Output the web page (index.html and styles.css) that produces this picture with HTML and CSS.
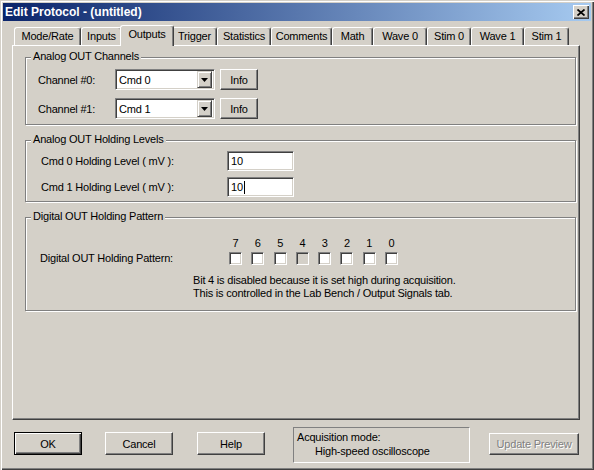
FILE: index.html
```html
<!DOCTYPE html>
<html>
<head>
<meta charset="utf-8">
<title>Edit Protocol</title>
<link rel="stylesheet" href="styles.css">
</head>
<body>
<div class="window">
  <div class="titlebar">
    <span class="title">Edit Protocol - (untitled)</span>
    <span class="close"><svg width="8" height="7" viewBox="0 0 8 7"><path d="M0.5 0.5L7.5 6.5M7.5 0.5L0.5 6.5" stroke="#000" stroke-width="1.7"/></svg></span>
  </div>
  <div class="client">
    <div class="tabs">
      <div class="tab t-mode">Mode/Rate</div>
      <div class="tab t-inputs">Inputs</div>
      <div class="tab t-outputs active">Outputs</div>
      <div class="tab t-trigger">Trigger</div>
      <div class="tab t-stats">Statistics</div>
      <div class="tab t-comments">Comments</div>
      <div class="tab t-math">Math</div>
      <div class="tab t-wave0">Wave 0</div>
      <div class="tab t-stim0">Stim 0</div>
      <div class="tab t-wave1">Wave 1</div>
      <div class="tab t-stim1">Stim 1</div>
    </div>
    <div class="panel">
      <div class="group g-channels">
        <span class="group-title">Analog OUT Channels</span>
        <div class="row">
          <span class="ch-label">Channel #0:</span>
          <div class="combo"><span class="combo-text">Cmd 0</span><span class="drop"><svg width="7" height="4" viewBox="0 0 7 4"><polygon points="0,0 7,0 3.5,4" fill="#000"/></svg></span></div>
          <div class="btn info">Info</div>
        </div>
        <div class="row row2">
          <span class="ch-label">Channel #1:</span>
          <div class="combo"><span class="combo-text">Cmd 1</span><span class="drop"><svg width="7" height="4" viewBox="0 0 7 4"><polygon points="0,0 7,0 3.5,4" fill="#000"/></svg></span></div>
          <div class="btn info">Info</div>
        </div>
      </div>
      <div class="group g-levels">
        <span class="group-title">Analog OUT Holding Levels</span>
        <div class="lrow">
          <span class="lv-label">Cmd 0 Holding Level ( mV ):</span>
          <div class="edit">10</div>
        </div>
        <div class="lrow lrow2">
          <span class="lv-label">Cmd 1 Holding Level ( mV ):</span>
          <div class="edit">10<span class="caret"></span></div>
        </div>
      </div>
      <div class="group g-digital">
        <span class="group-title">Digital OUT Holding Pattern</span>
        <div class="prow">
          <span class="dg-label">Digital OUT Holding Pattern:</span>
          <div class="bits">
            <div class="bit"><span class="num">7</span><span class="check"></span></div>
            <div class="bit"><span class="num">6</span><span class="check"></span></div>
            <div class="bit"><span class="num">5</span><span class="check"></span></div>
            <div class="bit"><span class="num">4</span><span class="check disabled"></span></div>
            <div class="bit"><span class="num">3</span><span class="check"></span></div>
            <div class="bit"><span class="num">2</span><span class="check"></span></div>
            <div class="bit"><span class="num">1</span><span class="check"></span></div>
            <div class="bit"><span class="num">0</span><span class="check"></span></div>
          </div>
        </div>
        <div class="note">Bit 4 is disabled because it is set high during acquisition.<br>This is controlled in the Lab Bench / Output Signals tab.</div>
      </div>
    </div>
    <div class="footer">
      <div class="btn fbtn default">OK</div>
      <div class="btn fbtn cancel">Cancel</div>
      <div class="btn fbtn help">Help</div>
      <div class="acq">
        <div>Acquisition mode:</div>
        <div class="acq-mode">High-speed oscilloscope</div>
      </div>
      <div class="btn update disabled-btn">Update Preview</div>
    </div>
  </div>
</div>
</body>
</html>
```

FILE: styles.css
```css
html, body {
  margin: 0;
  padding: 0;
  background: #D4D0C8;
}
body {
  font-family: "Liberation Sans", Arial, sans-serif;
  font-size: 11px;
  letter-spacing: -0.2px;
  color: #000;
}
.window {
  width: 594px;
  height: 470px;
  box-sizing: border-box;
  padding: 3px;
  background: #D4D0C8;
  box-shadow: inset 1px 1px 0 #D4D0C8, inset 2px 2px 0 #fff,
              inset -1px -1px 0 #404040, inset -2px -2px 0 #808080;
  display: flex;
  flex-direction: column;
}
.titlebar {
  height: 18px;
  display: flex;
  align-items: center;
  padding: 0 2px;
  background: linear-gradient(to right, #0A246A, #A6CAF0);
  color: #fff;
}
.title {
  font-weight: bold;
  font-size: 12px;
  letter-spacing: 0;
}
.close {
  margin-left: auto;
  width: 16px;
  height: 14px;
  box-sizing: border-box;
  background: #D4D0C8;
  box-shadow: inset 1px 1px 0 #fff, inset -1px -1px 0 #404040, inset -2px -2px 0 #808080;
  display: flex;
  align-items: center;
  justify-content: center;
}
.client {
  padding-left: 9px;
}
.tabs {
  display: flex;
  align-items: flex-end;
  height: 20px;
  margin-top: 4px;
  margin-left: 2px;
}
.tab {
  height: 18px;
  box-sizing: border-box;
  border: 1px solid #fff;
  border-bottom: 0;
  border-right-color: #404040;
  border-radius: 3px 3px 0 0;
  box-shadow: inset -1px 0 0 #808080;
  background: #D4D0C8;
  text-align: center;
  line-height: 17px;
  white-space: nowrap;
}
.tab.active {
  position: relative;
  z-index: 1;
  height: 21px;
  margin: 0 -2px -1px -2px;
  line-height: 16px;
}
.t-mode { width: 67px; }
.t-inputs { width: 41px; }
.t-outputs { width: 54px; }
.t-trigger { width: 45px; }
.t-stats { width: 54px; }
.t-comments { width: 61px; }
.t-math { width: 41px; }
.t-wave0 { width: 54px; }
.t-stim0 { width: 44px; }
.t-wave1 { width: 53px; }
.t-stim1 { width: 45px; }

.panel {
  width: 568px;
  height: 375px;
  box-sizing: border-box;
  border: 1px solid;
  border-color: #fff #404040 #404040 #fff;
  box-shadow: inset -1px -1px 0 #808080;
  padding: 11px 0 0 12px;
}
.group {
  position: relative;
  width: 551px;
  box-sizing: border-box;
  border: 1px solid #808080;
  box-shadow: inset 1px 1px 0 #fff, 1px 1px 0 #fff;
}
.group-title {
  position: absolute;
  top: -8px;
  left: 5px;
  padding: 0 2px;
  line-height: 13px;
  background: #D4D0C8;
}
.g-channels {
  padding: 11px 0 5px 12px;
}
.row {
  display: flex;
  align-items: center;
  height: 21px;
}
.row2 {
  margin-top: 8px;
}
.ch-label {
  width: 77px;
}
.combo {
  width: 100px;
  height: 21px;
  box-sizing: border-box;
  border: 1px solid;
  border-color: #808080 #fff #fff #808080;
  box-shadow: inset 1px 1px 0 #404040, inset -1px -1px 0 #D4D0C8;
  background: #fff;
  padding: 2px;
  display: flex;
  align-items: center;
}
.combo-text {
  flex: 1;
  padding-left: 1px;
}
.drop {
  width: 15px;
  height: 17px;
  box-sizing: border-box;
  background: #D4D0C8;
  border: 1px solid;
  border-color: #D4D0C8 #404040 #404040 #D4D0C8;
  box-shadow: inset 1px 1px 0 #fff, inset -1px -1px 0 #808080;
  display: flex;
  align-items: center;
  justify-content: center;
}
.btn {
  box-sizing: border-box;
  background: #D4D0C8;
  border: 1px solid;
  border-color: #fff #404040 #404040 #fff;
  box-shadow: inset -1px -1px 0 #808080;
  display: flex;
  align-items: center;
  justify-content: center;
}
.info {
  width: 38px;
  height: 21px;
  margin-left: 5px;
}

.g-levels {
  margin-top: 15px;
  padding: 10px 0 4px 15px;
}
.lrow {
  display: flex;
  align-items: center;
  height: 20px;
}
.lrow2 {
  margin-top: 6px;
}
.lv-label {
  width: 186px;
}
.edit {
  width: 67px;
  height: 20px;
  box-sizing: border-box;
  border: 1px solid;
  border-color: #808080 #fff #fff #808080;
  box-shadow: inset 1px 1px 0 #404040, inset -1px -1px 0 #D4D0C8;
  background: #fff;
  padding-left: 3px;
  display: flex;
  align-items: center;
}
.caret {
  display: inline-block;
  width: 1px;
  height: 13px;
  background: #000;
  margin-left: 1px;
}

.g-digital {
  margin-top: 15px;
  padding: 19px 0 10px 14px;
}
.prow {
  display: flex;
  align-items: flex-end;
}
.dg-label {
  width: 189px;
  line-height: 13px;
}
.bits {
  display: flex;
  gap: 9.3px;
}
.bit {
  width: 13px;
  display: flex;
  flex-direction: column;
  align-items: center;
}
.num {
  line-height: 13px;
  height: 13px;
}
.check {
  width: 13px;
  height: 13px;
  margin-top: 2px;
  box-sizing: border-box;
  border: 1px solid;
  border-color: #808080 #fff #fff #808080;
  box-shadow: inset 1px 1px 0 #404040, inset -1px -1px 0 #D4D0C8;
  background: #fff;
}
.check.disabled {
  background: #D4D0C8;
}
.note {
  margin: 9px 0 0 153px;
  line-height: 13px;
}

.footer {
  display: flex;
  align-items: flex-start;
  margin-top: 7px;
  padding-left: 2px;
}
.fbtn {
  width: 68px;
  height: 23px;
  margin-top: 5px;
}
.default {
  border-color: #000;
  box-shadow: inset 1px 1px 0 #fff, inset -1px -1px 0 #404040, inset -2px -2px 0 #808080;
}
.cancel { margin-left: 23px; }
.help { margin-left: 24px; }
.acq {
  width: 177px;
  height: 36px;
  box-sizing: border-box;
  margin-left: 28px;
  border: 1px solid;
  border-color: #808080 #fff #fff #808080;
  padding: 2px 0 0 3px;
  line-height: 14px;
}
.acq-mode {
  padding-left: 18px;
}
.update {
  width: 90px;
  height: 22px;
  margin-top: 6px;
  margin-left: 19px;
}
.disabled-btn {
  color: #808080;
  text-shadow: 1px 1px 0 #fff;
}
```
